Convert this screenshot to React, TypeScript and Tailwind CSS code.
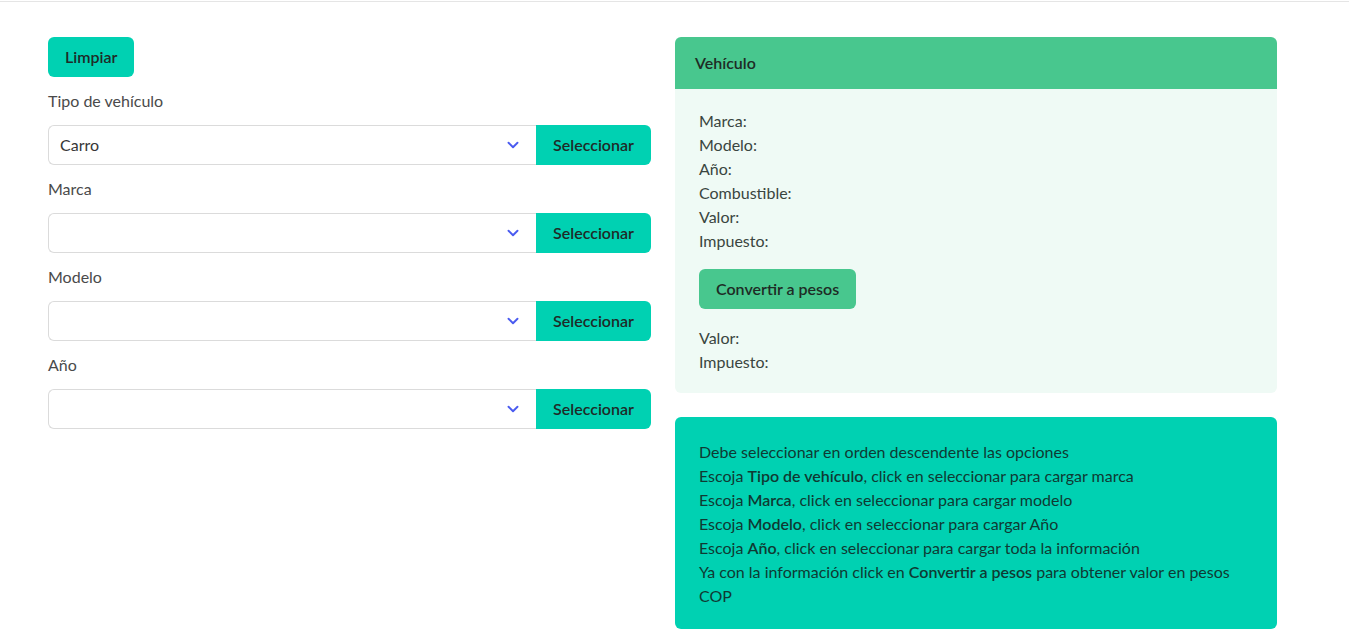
import { ChevronDown } from "lucide-react";

const fields = [
  { label: "Tipo de vehículo", value: "Carro" },
  { label: "Marca", value: "" },
  { label: "Modelo", value: "" },
  { label: "Año", value: "" },
];

function SelectRow({ label, value }: { label: string; value: string }) {
  return (
    <div className="mt-[12px]">
      <p className="h-[24px] text-[16px] leading-[24px] text-[#4a4a4a]">{label}</p>
      <div className="mt-[12px] flex h-[40px]">
        <div className="flex flex-1 items-center justify-between rounded-l-[6px] border border-r-0 border-[#dbdbdb] bg-white pl-[11px] pr-[14px]">
          <span className="text-[16px] text-[#363636]">{value}</span>
          <ChevronDown className="h-[18px] w-[18px] text-[#4a5bf0]" strokeWidth={2.5} />
        </div>
        <button className="w-[115px] rounded-r-[6px] bg-[#00d1b2] text-[16px] font-semibold text-[#1f2a27]">
          Seleccionar
        </button>
      </div>
    </div>
  );
}

export default function App() {
  return (
    <div className="min-h-screen bg-white font-['Lato',sans-serif] text-[16px] leading-[24px]">
      <div className="h-[2px] border-b border-[#e5e5e5]" />
      <div className="flex gap-[24px] pl-[48px] pt-[35px]">
        <div className="w-[603px]">
          <button className="h-[40px] rounded-[6px] bg-[#00d1b2] px-[17px] text-[16px] font-semibold text-[#1f2a27]">
            Limpiar
          </button>
          {fields.map((f) => (
            <SelectRow key={f.label} label={f.label} value={f.value} />
          ))}
        </div>

        <div className="w-[602px]">
          <div className="overflow-hidden rounded-[6px]">
            <div className="flex h-[52px] items-center bg-[#48c78e] px-[20px] font-semibold text-[#1e2b25]">
              Vehículo
            </div>
            <div className="bg-[#effaf5] px-[24px] pb-[19px] pt-[20px] text-[#3a4540]">
              <p>Marca:</p>
              <p>Modelo:</p>
              <p>Año:</p>
              <p>Combustible:</p>
              <p>Valor:</p>
              <p>Impuesto:</p>
              <button className="mb-[17px] mt-[16px] h-[40px] rounded-[6px] bg-[#48c78e] px-[17px] font-semibold text-[#1e2b25]">
                Convertir a pesos
              </button>
              <p>Valor:</p>
              <p>Impuesto:</p>
            </div>
          </div>

          <div className="mt-[24px] rounded-[6px] bg-[#00d1b2] px-[24px] pb-[21px] pt-[23px] text-[#0f3a33]">
            <p>Debe seleccionar en orden descendente las opciones</p>
            <p>
              Escoja <b className="font-semibold">Tipo de vehículo</b>, click en seleccionar para cargar marca
            </p>
            <p>
              Escoja <b className="font-semibold">Marca</b>, click en seleccionar para cargar modelo
            </p>
            <p>
              Escoja <b className="font-semibold">Modelo</b>, click en seleccionar para cargar Año
            </p>
            <p>
              Escoja <b className="font-semibold">Año</b>, click en seleccionar para cargar toda la información
            </p>
            <p>
              Ya con la información click en <b className="font-semibold">Convertir a pesos</b> para obtener valor en pesos
              <br />
              COP
            </p>
          </div>
        </div>
      </div>
    </div>
  );
}
